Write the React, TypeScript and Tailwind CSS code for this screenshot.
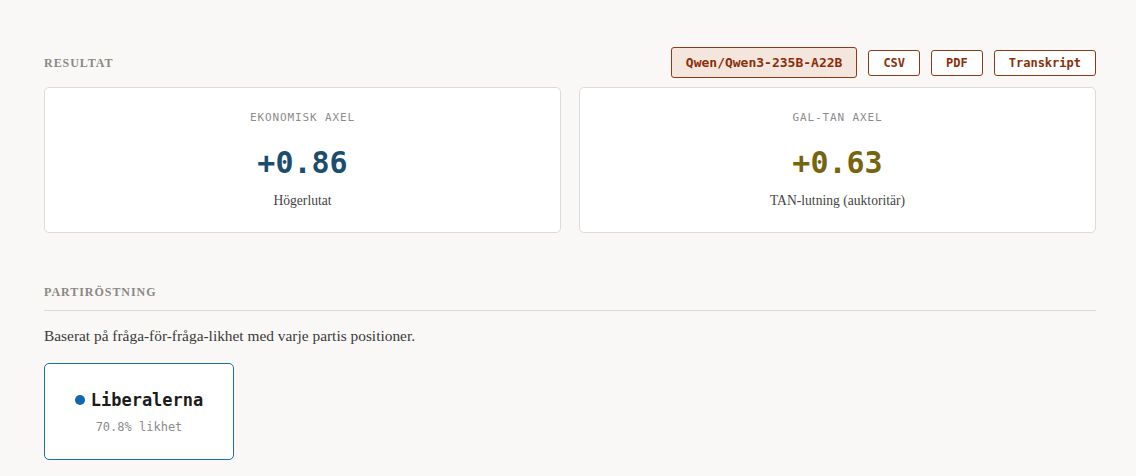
const serif = "font-['Liberation_Serif',serif]"
const mono = "font-['DejaVu_Sans_Mono',monospace]"

const axes = [
  { label: 'EKONOMISK AXEL', value: '+0.86', note: 'Högerlutat', color: 'text-[#1d4d6c]' },
  { label: 'GAL-TAN AXEL', value: '+0.63', note: 'TAN-lutning (auktoritär)', color: 'text-[#76650f]' },
]

export default function App() {
  return (
    <div className="min-h-[476px] bg-[#f9f8f6] pl-[44px] pr-[40px] pt-[47px]">
      {/* Resultat */}
      <div className="flex items-center justify-between">
        <h2 className={`${serif} text-[12px] font-bold tracking-[0.08em] text-[#8a8885]`}>RESULTAT</h2>
        <div className="flex items-center gap-[11px]">
          <span
            className={`${mono} flex h-[31px] items-center rounded-[3px] border border-[#8f3a16] bg-[#f5e6dd] px-[14px] text-[13px] font-bold text-[#8a2f0c]`}
          >
            Qwen/Qwen3-235B-A22B
          </span>
          {['CSV', 'PDF', 'Transkript'].map((b) => (
            <button
              key={b}
              className={`${mono} flex h-[26px] items-center rounded-[3px] border border-[#8f3a16] bg-white px-[14px] text-[12px] font-bold text-[#8a2f0c]`}
            >
              {b}
            </button>
          ))}
        </div>
      </div>

      <div className="mt-[9px] grid grid-cols-2 gap-[18px]">
        {axes.map((a) => (
          <div
            key={a.label}
            className="flex h-[146px] flex-col items-center rounded-[5px] border border-[#dddbd7] bg-white pt-[24px]"
          >
            <div className={`${mono} text-[11px] leading-[12px] tracking-[0.08em] text-[#8c8c8c]`}>{a.label}</div>
            <div className={`${mono} mt-[21px] text-[30px] font-bold leading-[36px] ${a.color}`}>{a.value}</div>
            <div className={`${serif} mt-[11px] text-[13.6px] leading-[18px] text-[#444]`}>{a.note}</div>
          </div>
        ))}
      </div>

      {/* Partiröstning */}
      <div className="mt-[51px] border-b border-[#dcdad6] pb-[10px]">
        <h2 className={`${serif} text-[12px] font-bold leading-[16px] tracking-[0.08em] text-[#8a8885]`}>
          PARTIRÖSTNING
        </h2>
      </div>
      <p className={`${serif} mt-[15px] text-[15.4px] leading-[20px] text-[#3a3a3a]`}>
        Baserat på fråga-för-fråga-likhet med varje partis positioner.
      </p>

      <div className="mt-[17px] flex h-[97px] w-[190px] flex-col items-center justify-center rounded-[5px] border border-[#1f6ea3] bg-white">
        <div className="flex items-center gap-[6px]">
          <span className="h-[10px] w-[10px] rounded-full bg-[#1168ae]" />
          <span className={`${mono} text-[17px] font-bold leading-[22px] text-[#1c1c1c]`}>Liberalerna</span>
        </div>
        <div className={`${mono} mt-[8px] text-[12px] leading-[16px] text-[#8c8c8c]`}>70.8% likhet</div>
      </div>
    </div>
  )
}
